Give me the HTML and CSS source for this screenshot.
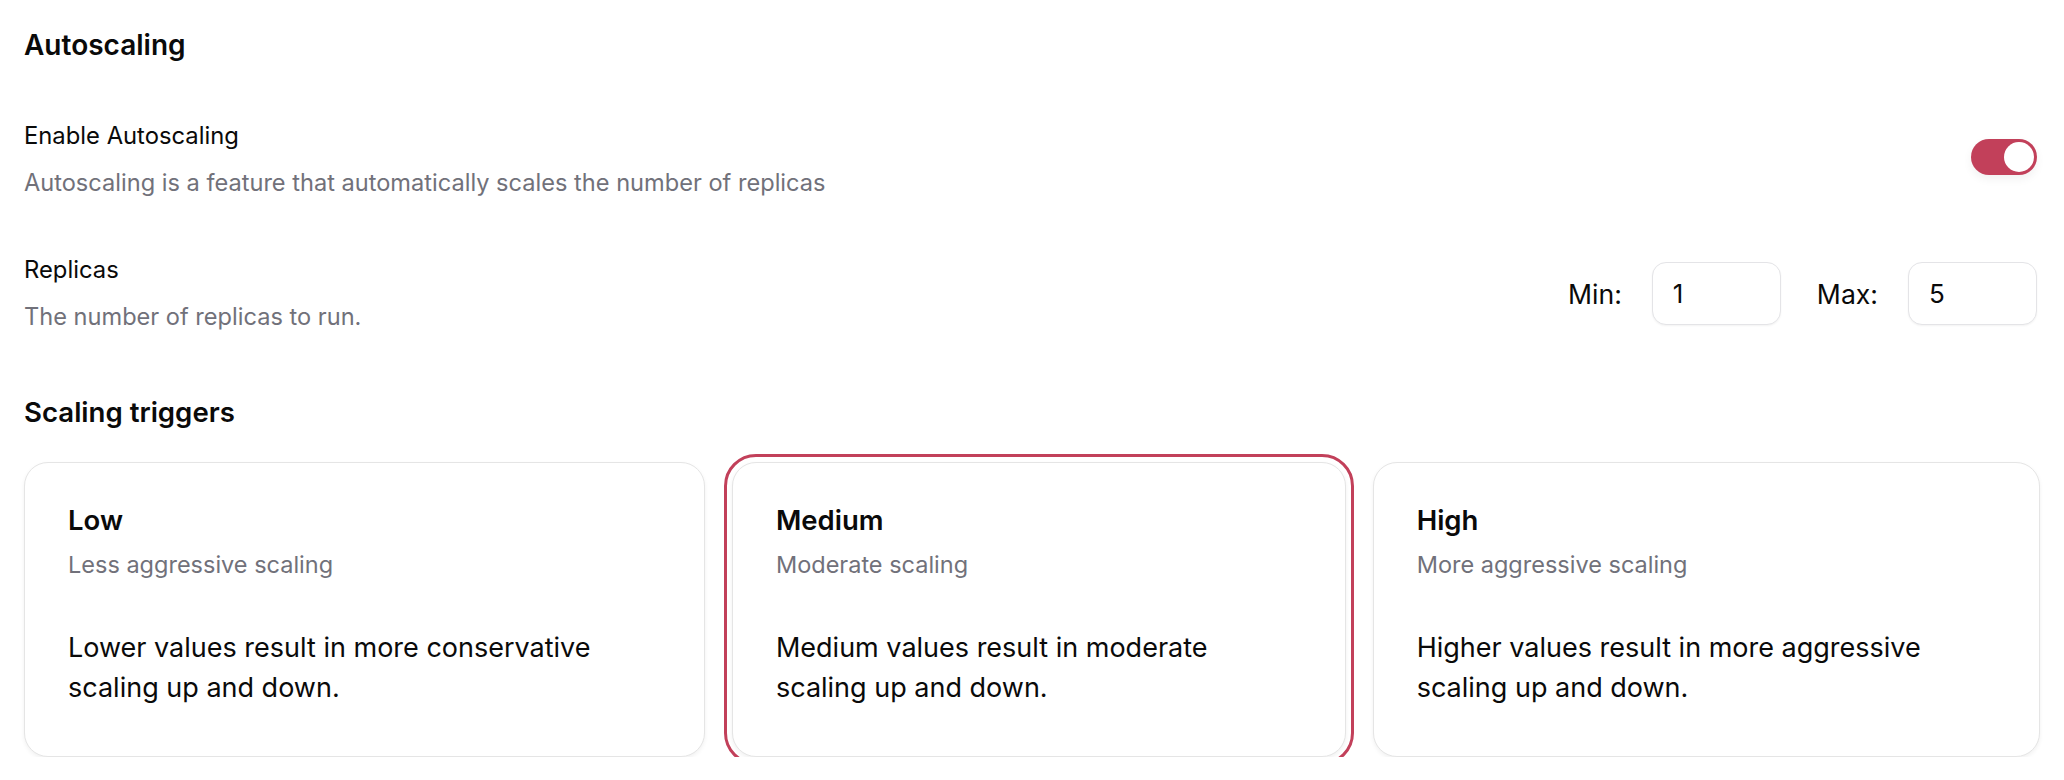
FILE: index.html
```html
<!DOCTYPE html>
<html lang="en">
<head>
    <meta charset="UTF-8">
    <meta name="viewport" content="width=device-width, initial-scale=1.0">
    <title>Autoscaling</title>
    <link rel="stylesheet" href="styles.css">
</head>
<body>
    <div class="page">
        <h2 class="section-title">Autoscaling</h2>

        <div class="setting-row">
            <div class="setting-text">
                <div class="setting-label">Enable Autoscaling</div>
                <div class="setting-desc">Autoscaling is a feature that automatically scales the number of replicas</div>
            </div>
            <label class="toggle">
                <input type="checkbox" checked>
                <span class="toggle-track"><span class="toggle-knob"></span></span>
            </label>
        </div>

        <div class="setting-row replicas-row">
            <div class="setting-text">
                <div class="setting-label">Replicas</div>
                <div class="setting-desc">The number of replicas to run.</div>
            </div>
            <div class="replica-inputs">
                <div class="input-group">
                    <label for="minReplicas">Min:</label>
                    <input type="number" id="minReplicas" value="1">
                </div>
                <div class="input-group">
                    <label for="maxReplicas">Max:</label>
                    <input type="number" id="maxReplicas" value="5">
                </div>
            </div>
        </div>

        <h3 class="sub-title">Scaling triggers</h3>

        <div class="trigger-cards">
            <div class="trigger-card">
                <div class="card-title">Low</div>
                <div class="card-sub">Less aggressive scaling</div>
                <p class="card-body">Lower values result in more conservative scaling up and down.</p>
            </div>
            <div class="trigger-card selected">
                <div class="card-title">Medium</div>
                <div class="card-sub">Moderate scaling</div>
                <p class="card-body">Medium values result in moderate scaling up and down.</p>
            </div>
            <div class="trigger-card">
                <div class="card-title">High</div>
                <div class="card-sub">More aggressive scaling</div>
                <p class="card-body">Higher values result in more aggressive scaling up and down.</p>
            </div>
        </div>
    </div>
</body>
</html>
```

FILE: styles.css
```css
body {
    margin: 0;
    background-color: #ffffff;
    font-family: Inter, "Noto Sans", sans-serif;
    color: #0a0a0a;
}
.page {
    padding: 25px 24px 0 24px;
}
.section-title {
    margin: 0;
    font-size: 28px;
    line-height: 40px;
    font-weight: 600;
}
.setting-row {
    display: flex;
    align-items: center;
    justify-content: space-between;
    margin-top: 56px;
}
.replicas-row {
    margin-top: 57px;
}
.setting-label {
    font-size: 23.8px;
    line-height: 30px;
    font-weight: 400;
}
.setting-desc {
    margin-top: 17px;
    font-size: 23.6px;
    line-height: 30px;
    color: #71717a;
}
.toggle {
    position: relative;
    display: inline-block;
    margin-right: 3px;
    margin-top: -6px;
}
.toggle input {
    display: none;
}
.toggle-track {
    display: flex;
    align-items: center;
    justify-content: flex-end;
    width: 66px;
    height: 36px;
    padding: 0 3px;
    box-sizing: border-box;
    border-radius: 18px;
    background-color: #c2405a;
    box-shadow: 0 4px 10px rgba(0,0,0,0.06);
    cursor: pointer;
}
.toggle-knob {
    width: 30px;
    height: 30px;
    border-radius: 50%;
    background-color: white;
}
.replica-inputs {
    display: flex;
    align-items: center;
    gap: 36px;
    margin-right: 3px;
}
.input-group {
    display: flex;
    align-items: center;
    gap: 30px;
}
.input-group label {
    font-size: 26.6px;
}
.input-group input {
    width: 129px;
    height: 63px;
    box-sizing: border-box;
    padding: 0 20px;
    border: 1.5px solid #e4e4e7;
    border-radius: 14px;
    font-family: inherit;
    font-size: 26px;
    color: #0a0a0a;
    box-shadow: 0 1px 2px rgba(0,0,0,0.05);
    -moz-appearance: textfield;
}
.input-group input::-webkit-outer-spin-button,
.input-group input::-webkit-inner-spin-button {
    -webkit-appearance: none;
    margin: 0;
}
.sub-title {
    margin: 62px 0 0 0;
    font-size: 27.6px;
    line-height: 36px;
    font-weight: 600;
}
.trigger-cards {
    display: flex;
    gap: 27px;
    margin-top: 32px;
}
.trigger-card {
    flex: 0 1 auto;
    padding: 39px 43px 48px 43px;
    border: 1.5px solid #e5e5e5;
    border-radius: 24px;
    background-color: white;
    box-shadow: 0 2px 4px rgba(0,0,0,0.06);
    cursor: pointer;
}
.trigger-card.selected {
    outline: 3px solid #c2405a;
    outline-offset: 5px;
}
.card-title {
    font-size: 27.5px;
    line-height: 36px;
    font-weight: 600;
}
.card-sub {
    margin-top: 12px;
    font-size: 23.5px;
    line-height: 30px;
    color: #71717a;
}
.card-body {
    margin: 48px 0 0 0;
    font-size: 27px;
    line-height: 40px;
}
```
